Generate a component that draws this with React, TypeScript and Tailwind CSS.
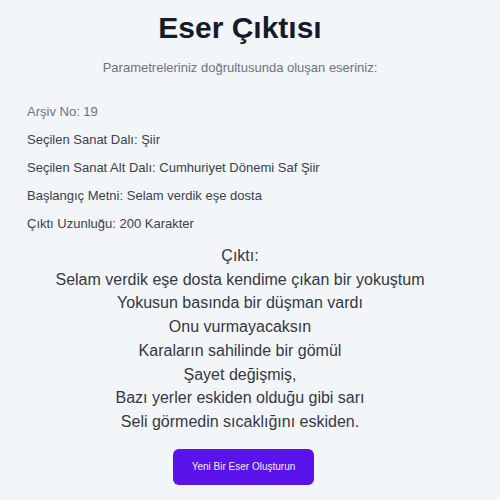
import React from "react";

const info = [
  { label: "Arşiv No", value: "19", muted: true },
  { label: "Seçilen Sanat Dalı", value: "Şiir" },
  { label: "Seçilen Sanat Alt Dalı", value: "Cumhuriyet Dönemi Saf Şiir" },
  { label: "Başlangıç Metni", value: "Selam verdik eşe dosta" },
  { label: "Çıktı Uzunluğu", value: "200 Karakter" },
];

const poem = [
  "Selam verdik eşe dosta kendime çıkan bir yokuştum",
  "Yokusun basında bir düşman vardı",
  "Onu vurmayacaksın",
  "Karaların sahilinde bir gömül",
  "Şayet değişmiş,",
  "Bazı yerler eskiden olduğu gibi sarı",
  "Seli görmedin sıcaklığını eskiden.",
];

const App: React.FC = (): React.ReactElement => {
  return (
    <div className="w-[500px] h-[500px] overflow-hidden bg-[#f3f6f9] font-['Liberation_Sans',Arial,sans-serif]">
      <div className="w-[480px]">
        <div className="pt-[10px] flex flex-col items-center">
          <h1 className="text-[30px] leading-[36px] font-bold text-[#161b2b]">
            Eser Çıktısı
          </h1>
          <p className="mt-[12px] text-[13px] leading-[20px] text-[#6b7280]">
            Parametreleriniz doğrultusunda oluşan eseriniz:
          </p>
        </div>
        <div className="mt-[24px] px-[27px] flex flex-col gap-[8px]">
          {info.map((item) => (
            <p
              key={item.label}
              className={`text-[13px] leading-[20px] ${
                item.muted ? "text-[#6b7280]" : "text-[#374151]"
              }`}
            >
              {item.label}: {item.value}
            </p>
          ))}
        </div>
        <div className="mt-[10px] flex flex-col items-center text-[16px] leading-[23.7px] text-[#333844]">
          <p>Çıktı:</p>
          {poem.map((line) => (
            <p key={line}>{line}</p>
          ))}
        </div>
        <div className="mt-[15px] pl-[7px] flex justify-center">
          <button className="h-[36px] w-[141px] rounded-[6px] bg-[#5b13ec] text-[10px] text-[#f1ebff]">
            Yeni Bir Eser Oluşturun
          </button>
        </div>
      </div>
    </div>
  );
};

export default App;
